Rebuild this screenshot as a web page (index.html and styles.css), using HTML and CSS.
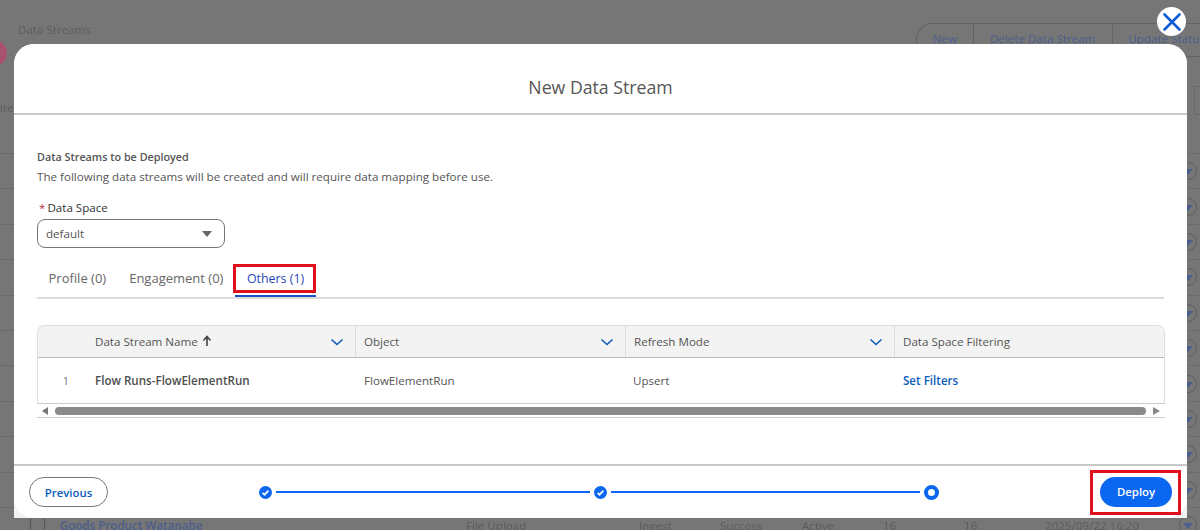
FILE: index.html
```html
<!DOCTYPE html>
<html lang="en">
<head>
  <meta charset="UTF-8">
  <meta name="viewport" content="width=device-width, initial-scale=1.0">
  <title>New Data Stream</title>
  <link rel="stylesheet" href="styles.css">
</head>
<body>
  <!-- Dimmed page behind the modal -->
  <div class="page">
    <div class="page-head">
      <div class="page-avatar"></div>
      <div class="page-title">Data Streams</div>
      <div class="page-actions">
        <span class="page-btn">New</span>
        <span class="page-btn">Delete Data Stream</span>
        <span class="page-btn">Update Status</span>
      </div>
    </div>
    <div class="page-count">
      <span class="page-count-text">items</span>
      <span class="page-head-cell"></span>
    </div>
    <div class="page-rows">
      <div class="page-row"><span class="row-menu"></span></div>
      <div class="page-row"><span class="row-menu"></span></div>
      <div class="page-row"><span class="row-menu"></span></div>
      <div class="page-row"><span class="row-menu"></span></div>
      <div class="page-row"><span class="row-menu"></span></div>
      <div class="page-row"><span class="row-menu"></span></div>
      <div class="page-row"><span class="row-menu"></span></div>
      <div class="page-row"><span class="row-menu"></span></div>
      <div class="page-row"><span class="row-menu"></span></div>
      <div class="page-row"><span class="row-menu"></span></div>
      <div class="page-row">
        <span class="row-check"></span>
        <span class="row-name">Goods Product Watanabe</span>
        <span class="row-a">File Upload</span>
        <span class="row-b">Ingest</span>
        <span class="row-c">Success</span>
        <span class="row-d">Active</span>
        <span class="row-e">16</span>
        <span class="row-f">16</span>
        <span class="row-g">2025/09/22 16:20</span>
        <span class="row-menu"></span>
      </div>
    </div>
  </div>

  <!-- Modal -->
  <button class="close-btn" aria-label="Close">
    <svg width="20" height="20" viewBox="0 0 20 20"><path d="M2.5 2.5 L17.5 17.5 M17.5 2.5 L2.5 17.5" stroke="#0b5cd5" stroke-width="2.6" stroke-linecap="round"/></svg>
  </button>
  <div class="modal">
    <div class="modal-header">New Data Stream</div>

    <div class="modal-body">
      <div class="section-title">Data Streams to be Deployed</div>
      <div class="section-text">The following data streams will be created and will require data mapping before use.</div>

      <div class="field-label"><span class="required">*</span>Data Space</div>
      <div class="select">
        <span>default</span>
        <span class="select-caret"></span>
      </div>

      <div class="tabs">
        <span class="tab">Profile (0)</span>
        <span class="tab">Engagement (0)</span>
        <span class="tab tab-active">Others (1)<span class="callout"></span></span>
      </div>

      <div class="table">
        <div class="table-row table-head">
          <div class="cell cell-num"></div>
          <div class="cell cell-name">Data Stream Name
            <svg class="sort-arrow" width="10" height="12" viewBox="0 0 10 12"><path d="M5 11 V2 M1.5 5.5 L5 1.5 L8.5 5.5" fill="none" stroke="#444" stroke-width="1.6"/></svg>
            <svg class="chevron" width="14" height="8" viewBox="0 0 14 8"><path d="M1.5 1.5 L7 6.5 L12.5 1.5" fill="none" stroke="#0b5cba" stroke-width="1.6"/></svg>
          </div>
          <div class="cell cell-object">Object
            <svg class="chevron" width="14" height="8" viewBox="0 0 14 8"><path d="M1.5 1.5 L7 6.5 L12.5 1.5" fill="none" stroke="#0b5cba" stroke-width="1.6"/></svg>
          </div>
          <div class="cell cell-mode">Refresh Mode
            <svg class="chevron" width="14" height="8" viewBox="0 0 14 8"><path d="M1.5 1.5 L7 6.5 L12.5 1.5" fill="none" stroke="#0b5cba" stroke-width="1.6"/></svg>
          </div>
          <div class="cell cell-filter">Data Space Filtering</div>
        </div>
        <div class="table-row table-data">
          <div class="cell cell-num row-num">1</div>
          <div class="cell cell-name row-title">Flow Runs-FlowElementRun</div>
          <div class="cell cell-object row-object">FlowElementRun</div>
          <div class="cell cell-mode">Upsert</div>
          <div class="cell cell-filter"><a class="link" href="#">Set Filters</a></div>
        </div>
        <div class="scrollbar">
          <span class="arrow-left"></span>
          <span class="scroll-thumb"></span>
          <span class="arrow-right"></span>
        </div>
      </div>
    </div>

    <div class="modal-footer">
      <button class="btn-prev">Previous</button>
      <div class="progress">
        <span class="step-done"><svg width="13" height="13" viewBox="0 0 13 13"><circle cx="6.5" cy="6.5" r="6.5" fill="#0b66f0"/><path d="M3.6 6.8 L5.6 8.7 L9.4 4.7" fill="none" stroke="#fff" stroke-width="1.7"/></svg></span>
        <span class="step-line step-line-first"></span>
        <span class="step-done"><svg width="13" height="13" viewBox="0 0 13 13"><circle cx="6.5" cy="6.5" r="6.5" fill="#0b66f0"/><path d="M3.6 6.8 L5.6 8.7 L9.4 4.7" fill="none" stroke="#fff" stroke-width="1.7"/></svg></span>
        <span class="step-line step-line-second"></span>
        <span class="step-current"></span>
      </div>
      <div class="deploy-box"><button class="btn-deploy">Deploy</button></div>
    </div>
  </div>
</body>
</html>
```
FILE: styles.css
```css
body {
  margin: 0;
  width: 1200px;
  height: 530px;
  overflow: hidden;
  position: relative;
  font-family: "Open Sans", "Noto Sans", sans-serif;
  font-size: 11.6px;
  color: #444;
  background-color: #767676;
}

/* Page behind the modal */
.page {
  height: 530px;
  color: #5c5c5c;
  display: flex;
  flex-direction: column;
  filter: blur(0.5px);
}

.page-head {
  flex: none;
  display: flex;
  align-items: flex-start;
  height: 93px;
  box-sizing: border-box;
  padding-top: 23px;
}

.page-avatar {
  width: 26px;
  height: 26px;
  margin: 17px 0 0 -19px;
  border-radius: 50%;
  background-color: #a8526f;
}

.page-title {
  margin-left: 11px;
  margin-top: -1px;
}

.page-actions {
  display: flex;
  margin-left: auto;
  border: 1px solid #636363;
  border-right: 0;
  border-radius: 16px 0 0 16px;
  height: 32px;
  margin-right: -22px;
}

.page-btn {
  padding: 7px 16px 0;
  color: #4a5d8c;
  border-right: 1px solid #636363;
  white-space: nowrap;
}

.page-count {
  flex: none;
  height: 60px;
  display: flex;
  align-items: flex-start;
}

.page-count-text {
  margin-top: 7px;
}

.page-head-cell {
  margin-left: auto;
  margin-top: -7px;
  width: 5px;
  height: 27px;
  border-left: 1px solid #666;
  border-top: 1px solid #666;
  border-bottom: 1px solid #666;
}

.page-rows {
  flex: none;
  display: flex;
  flex-direction: column;
}

.page-row {
  flex: 0 0 35.4px;
  border-top: 1px solid #6a6a6a;
  box-sizing: border-box;
  display: flex;
  align-items: center;
  white-space: nowrap;
}

.row-menu {
  width: 18px;
  height: 18px;
  box-sizing: border-box;
  margin-left: auto;
  margin-right: 3px;
  border: 1px solid #5f5f5f;
  border-radius: 50%;
  display: flex;
  align-items: center;
  justify-content: center;
}

.row-menu::after {
  content: "";
  margin-top: 2px;
  border-left: 5px solid transparent;
  border-right: 5px solid transparent;
  border-top: 6px solid #4a5d8c;
}

.row-check {
  margin-left: 30px;
  width: 13px;
  align-self: stretch;
  border-left: 1px solid #555;
  border-right: 1px solid #555;
}

.row-name { margin-left: 15px; width: 406px; color: #4a5d8c; font-weight: 600; }
.row-a { width: 173px; }
.row-b { width: 81px; }
.row-c { width: 82px; }
.row-d { width: 81px; }
.row-e { width: 81px; }
.row-f { width: 81px; }
.row-g { width: 100px; }

/* Modal */
.modal {
  position: absolute;
  top: 44px;
  left: 14px;
  width: 1173px;
  height: 474px;
  background-color: #f3f3f3;
  border-radius: 20px 20px 0 0;
  display: flex;
  flex-direction: column;
}

.close-btn {
  position: absolute;
  top: 7px;
  left: 1157px;
  width: 29px;
  height: 29px;
  padding: 0;
  border: 0;
  border-radius: 50%;
  background-color: #fff;
  display: flex;
  align-items: center;
  justify-content: center;
}

.modal-header {
  height: 69px;
  flex: none;
  background-color: #fff;
  border-radius: 20px 20px 0 0;
  border-bottom: 2px solid #c9c9c9;
  text-align: center;
  font-size: 17.7px;
  line-height: 87px;
  color: #555;
}

.modal-body {
  flex: 1;
  background-color: #fff;
  padding: 34px 23px 0;
}

.section-title {
  font-size: 10.8px;
  font-weight: 600;
  color: #555;
  line-height: 15px;
}

.section-text {
  margin-top: 5px;
  color: #555;
  line-height: 16px;
}

.field-label {
  margin-top: 15px;
  line-height: 16px;
  color: #333;
}

.required {
  color: #c23934;
  margin: 0 2px;
}

.select {
  margin-top: 3px;
  width: 188px;
  height: 29px;
  box-sizing: border-box;
  border: 1px solid #777;
  border-radius: 8px;
  padding: 0 12px 0 8px;
  display: flex;
  align-items: center;
  justify-content: space-between;
  color: #555;
}

.select-caret {
  width: 0;
  height: 0;
  border-left: 5.5px solid transparent;
  border-right: 5.5px solid transparent;
  border-top: 6px solid #666;
}

.tabs {
  margin-top: 15px;
  height: 36px;
  box-sizing: border-box;
  border-bottom: 2px solid #ddd;
  display: flex;
  font-size: 13px;
  line-height: 31px;
  color: #666;
}

.tab {
  padding: 0 11.5px;
  height: 34px;
  box-sizing: border-box;
  position: relative;
  white-space: nowrap;
}

.tab-active {
  color: #1f45b8;
  font-size: 12.4px;
  line-height: 32px;
  border-bottom: 2px solid #1e4fc2;
  padding: 0 12px;
}

.callout {
  position: absolute;
  top: 1px;
  left: -2px;
  right: 0;
  bottom: 2px;
  border: 3px solid #e0101f;
}

.table {
  margin-top: 26px;
  width: 1126px;
  border: 1px solid #ddd;
  border-bottom: 0;
  border-radius: 8px 8px 0 0;
}

.table-row {
  display: flex;
}

.table-head {
  height: 31px;
  background-color: #f3f3f3;
  border-bottom: 1px solid #bbb;
  border-radius: 8px 8px 0 0;
  color: #555;
  font-weight: 500;
}

.table-head .cell {
  padding-bottom: 1px;
}

.cell {
  box-sizing: border-box;
  display: flex;
  align-items: center;
  position: relative;
  padding-left: 8px;
  white-space: nowrap;
}

.table-head .cell + .cell + .cell {
  border-left: 1px solid #ddd;
}

.cell-num { width: 49px; padding-left: 0; justify-content: flex-end; padding-right: 18px; }
.cell-name { width: 268px; }
.cell-object { width: 270px; }
.cell-mode { width: 269px; }
.cell-filter { flex: 1; }

.chevron {
  position: absolute;
  right: 11px;
  top: 12px;
}

.sort-arrow {
  margin-left: 4px;
}

.table-data {
  height: 45px;
  color: #555;
}

.row-num { color: #777; font-size: 11px; }
.row-title { font-weight: 600; color: #4d4d4d; }
.row-object { padding-left: 9px; }

.link {
  margin-left: 1px;
  color: #0b5cba;
  font-weight: 600;
  text-decoration: none;
}

.scrollbar {
  height: 13px;
  background-color: #fff;
  border-top: 1px solid #ccc;
  border-bottom: 1px solid #ccc;
  margin: 0 -1px;
  display: flex;
  align-items: center;
  gap: 7px;
  padding: 0 5px;
}

.scroll-thumb {
  flex: 1;
  height: 8px;
  border-radius: 4px;
  background-color: #8a8a8a;
}

.arrow-left {
  border-top: 4px solid transparent;
  border-bottom: 4px solid transparent;
  border-right: 6px solid #777;
}

.arrow-right {
  border-top: 4px solid transparent;
  border-bottom: 4px solid transparent;
  border-left: 7px solid #888;
}

.modal-footer {
  height: 54px;
  flex: none;
  box-sizing: border-box;
  background-color: #fff;
  border-radius: 0 0 20px 20px;
  border-top: 2px solid #c9c9c9;
  display: flex;
  align-items: center;
  padding: 0 15px;
}

.btn-prev {
  width: 79px;
  height: 30px;
  border: 1px solid #777;
  border-radius: 15px;
  background-color: #fff;
  color: #0b5cba;
  font: 600 11.4px "Open Sans", sans-serif;
}

.progress {
  display: flex;
  align-items: center;
  gap: 4px;
  margin-left: 151px;
}

.step-done {
  display: flex;
}

.step-line {
  height: 2px;
  background-color: #0b66f0;
}

.step-line-first { width: 314px; }
.step-line-second { width: 309px; }

.step-current {
  width: 15px;
  height: 15px;
  box-sizing: border-box;
  border: 4px solid #0b66f0;
  border-radius: 50%;
}

.deploy-box {
  margin-left: auto;
  margin-right: -9px;
  border: 3px solid #e0101f;
  padding: 4px 6px 5px 7px;
  display: flex;
}

.btn-deploy {
  width: 72px;
  height: 30px;
  border: 0;
  border-radius: 15px;
  background-color: #0b66f0;
  color: #fff;
  font: 600 11.4px "Open Sans", sans-serif;
}
```
